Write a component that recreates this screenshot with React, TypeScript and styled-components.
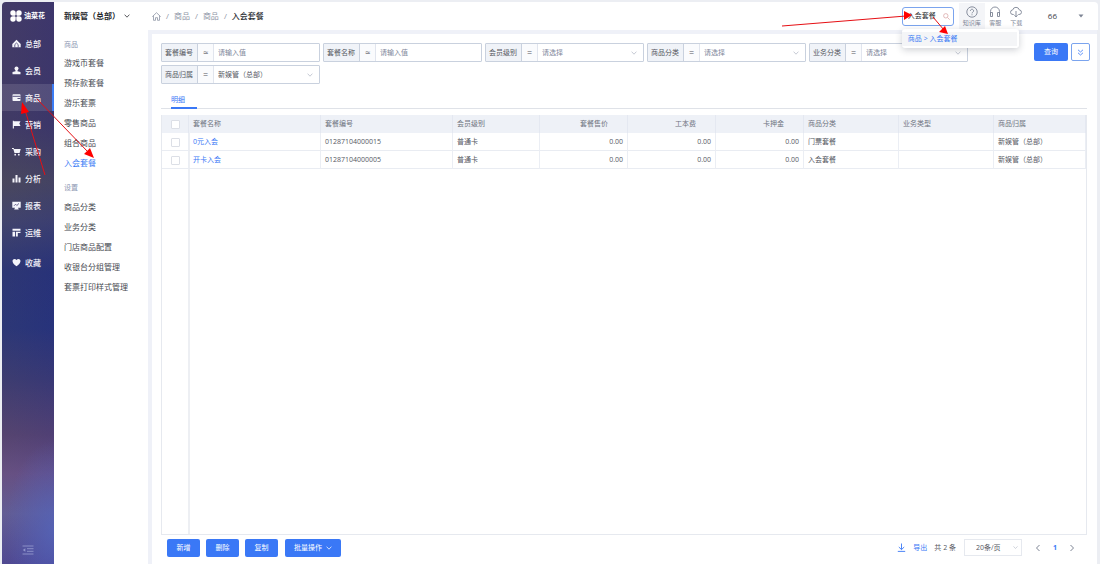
import React from "react";
import styled, { createGlobalStyle, css } from "styled-components";

const GlobalStyle = createGlobalStyle`
  * { box-sizing: border-box; }
  html, body { margin: 0; padding: 0; background: #eceef3; }
  body, button, input, select, table {
    font-family: "Open Sans", "Noto Sans CJK SC", sans-serif;
    font-size: 7px;
    line-height: 10px;
    color: #55585f;
  }
  a { color: inherit; text-decoration: none; }
  button, input, select { margin: 0; padding: 0; border: 0; background: none; outline: none; }
`;

const Page = styled.div`
  position: relative;
  display: flex;
  min-height: 100vh;
  padding: 2px 2px 0;
`;

const Sidebar = styled.nav`
  display: flex;
  flex-direction: column;
  flex: 0 0 52px;
  border-top-left-radius: 4px;
  background:
    radial-gradient(ellipse 48px 90px at 100% 94%, rgba(84, 104, 190, 0.7), rgba(84, 104, 190, 0)),
    linear-gradient(90deg, rgba(78, 76, 84, 0.15), rgba(40, 44, 120, 0.15)),
    linear-gradient(180deg, #41386a 0%, #3f3867 22%, #49475f 32%, #3f4270 39%, #283379 48%, #27347c 58%, #3a3a75 67%, #574374 77%, #6c528a 84%, #66609f 91%, #51499c 100%);
`;

const Logo = styled.div`
  display: flex;
  align-items: center;
  gap: 2px;
  height: 28px;
  padding-left: 8px;
  color: #fff;
  font-size: 7px;
  font-weight: 700;
`;

const NavItem = styled.a<{ $active?: boolean; $apart?: boolean }>`
  display: flex;
  align-items: center;
  gap: 4px;
  height: 27px;
  margin-top: ${(p) => (p.$apart ? "3px" : "0")};
  padding-left: 10px;
  border-right: 2px solid ${(p) => (p.$active ? "#3b7cf5" : "transparent")};
  background: ${(p) => (p.$active ? "rgba(255, 255, 255, 0.12)" : "none")};
  background-clip: padding-box;
  color: #f4f4fa;
  font-size: 8px;
  font-weight: 500;
  line-height: 12px;
`;

const Collapse = styled.button`
  margin: auto auto 6px;
  color: #9296cc;
  height: 14px;
`;

const Submenu = styled.nav`
  display: flex;
  flex-direction: column;
  flex: 0 0 94px;
  padding-left: 10px;
  background: #fff;
`;

const Venue = styled.button`
  display: flex;
  align-items: center;
  gap: 4px;
  height: 28px;
  color: #25272c;
  font-size: 8px;
  font-weight: 700;
  white-space: nowrap;
`;

const GroupTitle = styled.h2<{ $first?: boolean }>`
  margin: ${(p) => (p.$first ? "10px 0 3px" : "10px 0 4px")};
  color: #8d98b3;
  font-size: 7px;
  font-weight: 400;
  line-height: 10px;
`;

const SubItem = styled.a<{ $active?: boolean }>`
  color: ${(p) => (p.$active ? "#3b7cf5" : "#45484f")};
  font-size: 8px;
  line-height: 20px;
  white-space: nowrap;
`;

const Main = styled.div`
  display: flex;
  flex-direction: column;
  flex: 1;
  min-width: 0;
`;

const Header = styled.header`
  display: flex;
  align-items: center;
  height: 28px;
  padding: 0 14px 0 4px;
  background: #fff;
  border-top-right-radius: 4px;
`;

const Crumbs = styled.div`
  display: flex;
  align-items: center;
  gap: 5px;
  flex: 1;
  color: #8d94a5;
  font-size: 8px;
  line-height: 12px;
`;

const CrumbCurrent = styled.strong`
  color: #2c2e33;
  font-weight: 500;
`;

const SearchWrap = styled.div`
  position: relative;
`;

const SearchField = styled.label`
  display: flex;
  align-items: center;
  width: 52px;
  height: 19px;
  padding: 0 3px 0 5px;
  border: 1px solid #7ba4ee;
  border-radius: 3px;
  color: #dba9a9;
`;

const SearchInput = styled.input`
  flex: 1;
  min-width: 0;
  color: #2c2e33;
`;

const SearchMenu = styled.div`
  position: absolute;
  top: 22px;
  left: 0;
  z-index: 5;
  width: 117px;
  padding: 3px 2px 2px 0;
  border-radius: 3px;
  background: #fff;
  box-shadow: 0 2px 7px rgba(30, 40, 60, 0.22);
`;

const SearchResult = styled.a`
  display: block;
  padding-left: 6px;
  background: #f4f5f7;
  color: #3b7cf5;
  line-height: 14px;
`;

const HeaderTools = styled.div`
  display: flex;
  margin: 0 21px 0 5px;
`;

const Tool = styled.button<{ $active?: boolean }>`
  display: flex;
  flex-direction: column;
  align-items: center;
  gap: 1px;
  min-width: ${(p) => (p.$active ? "26px" : "21px")};
  height: 26px;
  padding-top: 3px;
  background: ${(p) => (p.$active ? "#f4f5f8" : "none")};
  color: #7d8494;
  font-size: 6px;
  line-height: 9px;
`;

const User = styled.button`
  display: flex;
  align-items: center;
  gap: 21px;
  color: #3c3f46;
  font-size: 8px;
  line-height: 12px;
`;

const Content = styled.main`
  display: flex;
  flex-direction: column;
  flex: 1;
  margin: 4px 0 0 4px;
  padding: 9px 10px 0 9px;
  background: #fff;
`;

const Body = styled.div`
  display: flex;
  flex-direction: column;
  flex: 1;
  margin-right: 1px;
  background: #eff1f8;
`;

const FilterBar = styled.form`
  display: flex;
  align-items: flex-start;
  gap: 66px;
  margin-right: -3px;
`;

const Filters = styled.div`
  display: grid;
  flex: 1;
  grid-template-columns: repeat(5, 1fr);
  gap: 3px;
`;

const Filter = styled.div`
  display: flex;
  height: 19px;
  border: 1px solid #c9d1de;
  border-radius: 1px;
`;

const FilterLabel = styled.label`
  flex: 0 0 36px;
  padding-left: 3px;
  border-right: 1px solid #c9d1de;
  background: #f0f3f8;
  line-height: 17px;
  white-space: nowrap;
`;

const Operator = styled.span`
  flex: 0 0 16px;
  border-right: 1px solid #e1e5ee;
  background: #fafbfd;
  font-size: 9px;
  line-height: 17px;
  text-align: center;
`;

const control = css`
  flex: 1;
  min-width: 0;
  padding-left: 4px;
`;

const FilterInput = styled.input`
  ${control}
  &::placeholder { color: #80879a; opacity: 1; }
`;

const FilterSelect = styled.select<{ $empty?: boolean }>`
  ${control}
  appearance: none;
  color: ${(p) => (p.$empty ? "#80879a" : "#55585f")};
`;

const SelectArrow = styled.span`
  display: flex;
  align-items: center;
  padding-right: 6px;
  color: #b4bac7;
`;

const FilterActions = styled.div`
  display: flex;
  gap: 3px;
`;

const PrimaryButton = styled.button`
  display: flex;
  align-items: center;
  justify-content: center;
  gap: 4px;
  height: 18px;
  padding: 0 9px;
  border-radius: 2px;
  background: #3a78f6;
  color: #fff;
  white-space: nowrap;
`;

const QueryButton = styled(PrimaryButton)`
  padding: 0 10px;
`;

const ExpandButton = styled.button`
  display: flex;
  align-items: center;
  justify-content: center;
  width: 19px;
  height: 18px;
  border: 1px solid #7ba4ee;
  border-radius: 2px;
  color: #3a78f6;
`;

const Tabs = styled.div`
  display: flex;
  margin-top: 8px;
  padding-left: 10px;
  border-bottom: 1px solid #dfe2e8;
`;

const Tab = styled.button`
  width: 26px;
  margin-bottom: -1px;
  border-bottom: 2px solid #3a78f6;
  color: #3a78f6;
  line-height: 15px;
  text-align: left;
`;

const TableArea = styled.div`
  flex: 1;
  margin-top: 6px;
  border: 1px solid #e6e9ef;
  border-top: 0;
  background: linear-gradient(#edeff3, #edeff3) 26px 0 / 2px 100% no-repeat;
`;

const Table = styled.table`
  width: 100%;
  table-layout: fixed;
  border-collapse: separate;
  border-spacing: 0;
`;

const cell = css<{ $num?: boolean }>`
  padding: 0 4px;
  border-right: 1px solid #ebeef4;
  text-align: ${(p) => (p.$num ? "right" : "left")};
  white-space: nowrap;
`;

const Th = styled.th<{ $num?: boolean }>`
  ${cell}
  height: 18px;
  padding-right: ${(p) => (p.$num ? "19px" : "4px")};
  border-color: #e4e8f1;
  background: #eef1f7;
  color: #6f7480;
  font-weight: 400;
`;

const Td = styled.td<{ $num?: boolean }>`
  ${cell}
  height: 18px;
  border-bottom: 1px solid #e9ecf2;
`;

const RowLink = styled.a`
  color: #3a78f6;
`;

const Check = styled.input`
  display: block;
  appearance: none;
  width: 9px;
  height: 9px;
  margin: 1px 0 0 5px;
  border: 1px solid #dcdfe6;
  border-radius: 1px;
  background: #fff;
`;

const Footer = styled.footer`
  display: flex;
  align-items: center;
  height: 29px;
  padding: 0 12px 4px 6px;
`;

const FooterButtons = styled.div`
  display: flex;
  gap: 6px;
  flex: 1;
`;

const ActionButton = styled(PrimaryButton)`
  width: 33px;
`;

const BatchButton = styled(PrimaryButton)`
  margin-left: 1px;
`;

const Pager = styled.div`
  display: flex;
  align-items: center;
`;

const ExportLink = styled.a`
  display: flex;
  align-items: center;
  gap: 7px;
  margin-right: 7px;
  color: #3a78f6;
`;

const PageSize = styled.label`
  display: flex;
  align-items: center;
  width: 58px;
  height: 17px;
  margin: 0 13px 0 8px;
  border: 1px solid #e6e9ef;
  color: #b4bac7;
`;

const PageSizeSelect = styled.select`
  appearance: none;
  flex: 1;
  min-width: 0;
  padding-left: 11px;
`;

const PageSizeArrow = styled.span`
  display: flex;
  padding-right: 3px;
`;

const PageStep = styled.button`
  display: flex;
  color: #7d8494;
`;

const PageNumber = styled.a`
  margin: 0 12px;
  color: #3a78f6;
  font-weight: 700;
`;

const Annotations = styled.svg`
  position: absolute;
  top: 0;
  left: 0;
  z-index: 10;
  pointer-events: none;
`;

const RightAnnotations = styled(Annotations)`
  left: auto;
  right: 0;
`;

const Chevron = ({ size = 6 }: { size?: number }) => (
  <svg width={size} height={size} viewBox="0 0 8 8" fill="none" stroke="currentColor">
    <path d="M0.8 2.2 4 5.6 7.2 2.2" />
  </svg>
);

const Step = ({ d }: { d: string }) => (
  <svg width="6" height="8" viewBox="0 0 6 8" fill="none" stroke="currentColor">
    <path d={d} />
  </svg>
);

const NavIcon = ({ children }: { children: React.ReactNode }) => (
  <svg width="9" height="9" viewBox="0 0 9 9" fill="currentColor">{children}</svg>
);

const dark = "#454070";
const navItems: { name: string; icon: React.ReactNode; active?: boolean; apart?: boolean }[] = [
  { name: "总部", icon: <><path d="M0.3 8.3V5L4.5 0.8 8.7 5v3.3z" /><path d="M2.8 8.3V5.6L4.5 4l1.7 1.6v2.7" fill="none" stroke={dark} strokeWidth="0.8" /></> },
  { name: "会员", icon: <><circle cx="4.5" cy="2.6" r="2" /><path d="M3.5 3.5h2v1.7l3 .9v2.2h-8V6.1l3-.9z" /></> },
  { name: "商品", active: true, icon: <><rect x="0.5" y="1.2" width="8" height="6.8" rx="0.8" /><path d="M0.5 3.3h8M5.5 5.5h3" stroke={dark} strokeWidth="0.9" /></> },
  { name: "营销", icon: <path d="M0.8 0.8h1V1.3h6.7L7.3 3.6 8.5 6H1.9v2.6H0.8z" /> },
  { name: "采购", icon: <><path d="M0 1h1.7l.4 1h6.6L7.6 6H2.5L1.300 2H0z" /><circle cx="3.2" cy="7.7" r="0.9" /><circle cx="6.8" cy="7.7" r="0.9" /></> },
  { name: "分析", icon: <path d="M0.5 4.5h2v4h-2zM3.500 1h2v7.500h-2zM6.500 3.500h2v5h-2z" /> },
  { name: "报表", icon: <><path d="M0.3 0.7h8.4v6H6l.8 1.8H2.2L3 6.7H0.300z" /><path d="M2 4.8 3.600 3.200l1.200 1.300L7 2.400" fill="none" stroke={dark} strokeWidth="0.8" /></> },
  { name: "运维", icon: <path d="M0.5 0.8h8v2h-8zM0.5 3.7h2.6v4.8H0.5zM4 3.700h4.500v1.400H5.800v3.400H4z" /> },
  { name: "收藏", apart: true, icon: <path d="M4.5 8.3C2 6.500.5 5 .5 3.100.5 1 3.200.2 4.500 2 5.800.2 8.500 1 8.500 3.100 8.500 5 7 6.500 4.500 8.300z" /> },
];

const goods = ["游戏币套餐", "预存款套餐", "游乐套票", "零售商品", "组合商品", "入会套餐"];
const settings = ["商品分类", "业务分类", "门店商品配置", "收银台分组管理", "套票打印样式管理"];

const filters = [
  { id: "code", label: "套餐编号", op: "≈", kind: "input", text: "请输入值" },
  { id: "name", label: "套餐名称", op: "≈", kind: "input", text: "请输入值" },
  { id: "level", label: "会员级别", op: "=", kind: "select", text: "请选择", empty: true },
  { id: "category", label: "商品分类", op: "=", kind: "select", text: "请选择", empty: true },
  { id: "business", label: "业务分类", op: "=", kind: "select", text: "请选择", empty: true },
  { id: "owner", label: "商品归属", op: "=", kind: "select", text: "新娱管（总部）" },
];

const columns = [
  { name: "套餐名称", width: 132 },
  { name: "套餐编号", width: 132 },
  { name: "会员级别", width: 87 },
  { name: "套餐售价", width: 88, num: true },
  { name: "工本费", width: 88, num: true },
  { name: "卡押金", width: 88, num: true },
  { name: "商品分类", width: 95 },
  { name: "业务类型", width: 95 },
  { name: "商品归属", width: 92 },
];

const rows = [
  ["0元入会", "01287104000015", "普通卡", "0.00", "0.00", "0.00", "门票套餐", "", "新娱管（总部）"],
  ["开卡入会", "01287104000005", "普通卡", "0.00", "0.00", "0.00", "入会套餐", "", "新娱管（总部）"],
];

export default function App() {
  return (
    <Page>
      <GlobalStyle />
      <Sidebar>
        <Logo>
          <svg width="12" height="12" viewBox="0 0 12 12" fill="#fff">
            <path d="M3 .3A2.7 2.7 0 0 1 5.7 3v2.7H3A2.7 2.7 0 0 1 3 .3zM9 .3a2.7 2.7 0 0 1 0 5.4H6.3V3A2.7 2.7 0 0 1 9 .3zM3 6.3h2.7V9A2.7 2.7 0 1 1 3 6.3zM6.3 6.3H9A2.7 2.7 0 1 1 6.3 9z" />
            <circle cx="6" cy="6" r="0.9" fill={dark} />
          </svg>
          油菜花
        </Logo>
        {navItems.map((n) => (
          <NavItem key={n.name} href="#" $active={n.active} $apart={n.apart}>
            <NavIcon>{n.icon}</NavIcon>
            {n.name}
          </NavItem>
        ))}
        <Collapse aria-label="收起">
          <svg width="12" height="10" viewBox="0 0 12 10" fill="none" stroke="currentColor" strokeWidth="0.9">
            <path d="M0.5 1h11M5 3.7h6.5M5 6.3h6.5M0.5 9h11" />
            <path d="M3.3 3.2v3.6L0.8 5z" fill="currentColor" stroke="none" />
          </svg>
        </Collapse>
      </Sidebar>

      <Submenu>
        <Venue>新娱管（总部）<Chevron /></Venue>
        <GroupTitle $first>商品</GroupTitle>
        {goods.map((g) => <SubItem key={g} href="#" $active={g === "入会套餐"}>{g}</SubItem>)}
        <GroupTitle>设置</GroupTitle>
        {settings.map((s) => <SubItem key={s} href="#">{s}</SubItem>)}
      </Submenu>

      <Main>
        <Header>
          <Crumbs>
            <svg width="9" height="9" viewBox="0 0 9 9" fill="none" stroke="currentColor" strokeWidth="0.8">
              <path d="M0.3 4.7 4.5 0.7l4.2 4M1.5 3.8v4.5h2V5.7h2v2.6h2V3.8" />
            </svg>
            <span>/</span><a href="#">商品</a><span>/</span><a href="#">商品</a><span>/</span>
            <CrumbCurrent>入会套餐</CrumbCurrent>
          </Crumbs>
          <SearchWrap>
            <SearchField>
              <SearchInput aria-label="搜索" defaultValue="入会套餐" />
              <svg width="7" height="7" viewBox="0 0 7 7" fill="none" stroke="currentColor" strokeWidth="0.8">
                <circle cx="2.8" cy="2.8" r="2.2" /><path d="m4.5 4.5 2.2 2.2" />
              </svg>
            </SearchField>
            <SearchMenu><SearchResult href="#">商品 &gt; 入会套餐</SearchResult></SearchMenu>
          </SearchWrap>
          <HeaderTools>
            <Tool $active>
              <svg width="12" height="12" viewBox="0 0 12 12" fill="none" stroke="currentColor" strokeWidth="0.9">
                <circle cx="6" cy="6" r="5.2" /><path d="M4.4 4.8a1.6 1.6 0 1 1 2.4 1.4c-.5.3-.8.6-.8 1.2M6 8.3v1" />
              </svg>
              知识库
            </Tool>
            <Tool>
              <svg width="12" height="12" viewBox="0 0 12 12" fill="none" stroke="currentColor" strokeWidth="0.9">
                <path d="M1.5 9V5.5a4.5 4.5 0 0 1 9 0V9M1.5 6.5h2v4h-2zM8.5 6.5h2v4h-2z" />
              </svg>
              客服
            </Tool>
            <Tool>
              <svg width="12" height="12" viewBox="0 0 12 12" fill="none" stroke="currentColor" strokeWidth="0.9">
                <path d="M3.7 8.5H3a2.3 2.3 0 0 1-.3-4.6 3.4 3.4 0 0 1 6.6 0A2.3 2.3 0 0 1 9 8.5h-.7M6 5v5.8M4.3 9.2 6 10.8l1.700-1.600" />
              </svg>
              下载
            </Tool>
          </HeaderTools>
          <User>
            66
            <svg width="6" height="4" viewBox="0 0 6 4" fill="#7d8494"><path d="M0.5 0.5h5L3 3.5z" /></svg>
          </User>
        </Header>

        <Body>
          <Content>
            <FilterBar>
              <Filters>
                {filters.map((f) => (
                  <Filter key={f.id}>
                    <FilterLabel htmlFor={f.id}>{f.label}</FilterLabel>
                    <Operator>{f.op}</Operator>
                    {f.kind === "input" ? (
                      <FilterInput id={f.id} placeholder={f.text} />
                    ) : (
                      <>
                        <FilterSelect id={f.id} $empty={f.empty}><option>{f.text}</option></FilterSelect>
                        <SelectArrow><Chevron /></SelectArrow>
                      </>
                    )}
                  </Filter>
                ))}
              </Filters>
              <FilterActions>
                <QueryButton type="button">查询</QueryButton>
                <ExpandButton type="button" aria-label="展开">
                  <svg width="7" height="7" viewBox="0 0 7 7" fill="none" stroke="currentColor" strokeWidth="0.8">
                    <path d="M1 0.8 3.5 3 6 0.8M1 3.8 3.5 6 6 3.8" />
                  </svg>
                </ExpandButton>
              </FilterActions>
            </FilterBar>

            <Tabs><Tab>明细</Tab></Tabs>

            <TableArea>
              <Table>
                <colgroup>
                  <col style={{ width: 27 }} />
                  {columns.map((c) => <col key={c.name} style={{ width: c.width }} />)}
                </colgroup>
                <thead>
                  <tr>
                    <Th><Check type="checkbox" aria-label="全选" /></Th>
                    {columns.map((c) => <Th key={c.name} $num={c.num}>{c.name}</Th>)}
                  </tr>
                </thead>
                <tbody>
                  {rows.map((r) => (
                    <tr key={r[1]}>
                      <Td><Check type="checkbox" aria-label={r[0]} /></Td>
                      {r.map((v, i) => (
                        <Td key={columns[i].name} $num={columns[i].num}>
                          {i === 0 ? <RowLink href="#">{v}</RowLink> : v}
                        </Td>
                      ))}
                    </tr>
                  ))}
                </tbody>
              </Table>
            </TableArea>

            <Footer>
              <FooterButtons>
                <ActionButton>新增</ActionButton>
                <ActionButton>删除</ActionButton>
                <ActionButton>复制</ActionButton>
                <BatchButton>批量操作<Chevron /></BatchButton>
              </FooterButtons>
              <Pager>
                <ExportLink href="#">
                  <svg width="9" height="9" viewBox="0 0 9 9" fill="none" stroke="currentColor" strokeWidth="0.9">
                    <path d="M4.5 0.5v6M1.8 4l2.7 2.6L7.2 4M0.8 8.4h7.4" />
                  </svg>
                  导出
                </ExportLink>
                <span>共 2 条</span>
                <PageSize>
                  <PageSizeSelect aria-label="每页条数"><option>20条/页</option></PageSizeSelect>
                  <PageSizeArrow><Chevron size={5} /></PageSizeArrow>
                </PageSize>
                <PageStep aria-label="上一页"><Step d="M4.5 1 1.5 4l3 3" /></PageStep>
                <PageNumber href="#">1</PageNumber>
                <PageStep aria-label="下一页"><Step d="M1.5 1l3 3-3 3" /></PageStep>
              </Pager>
            </Footer>
          </Content>
        </Body>
      </Main>

      <Annotations width="110" height="180" fill="#f00" stroke="#e60f14">
        <path d="M45 175 25 110M37 99 88 152" fill="none" />
        <path d="M22 102 29 112 21 114zM94 158 84 154 90 148z" stroke="none" />
      </Annotations>
      <RightAnnotations width="330" height="50" fill="#f00" stroke="#e60f14">
        <path d="M12 26 136 16M163 17 174 30" fill="none" />
        <path d="M142 15 134 11 134 20zM178 34 169 32 175 26z" stroke="none" />
      </RightAnnotations>
    </Page>
  );
}
